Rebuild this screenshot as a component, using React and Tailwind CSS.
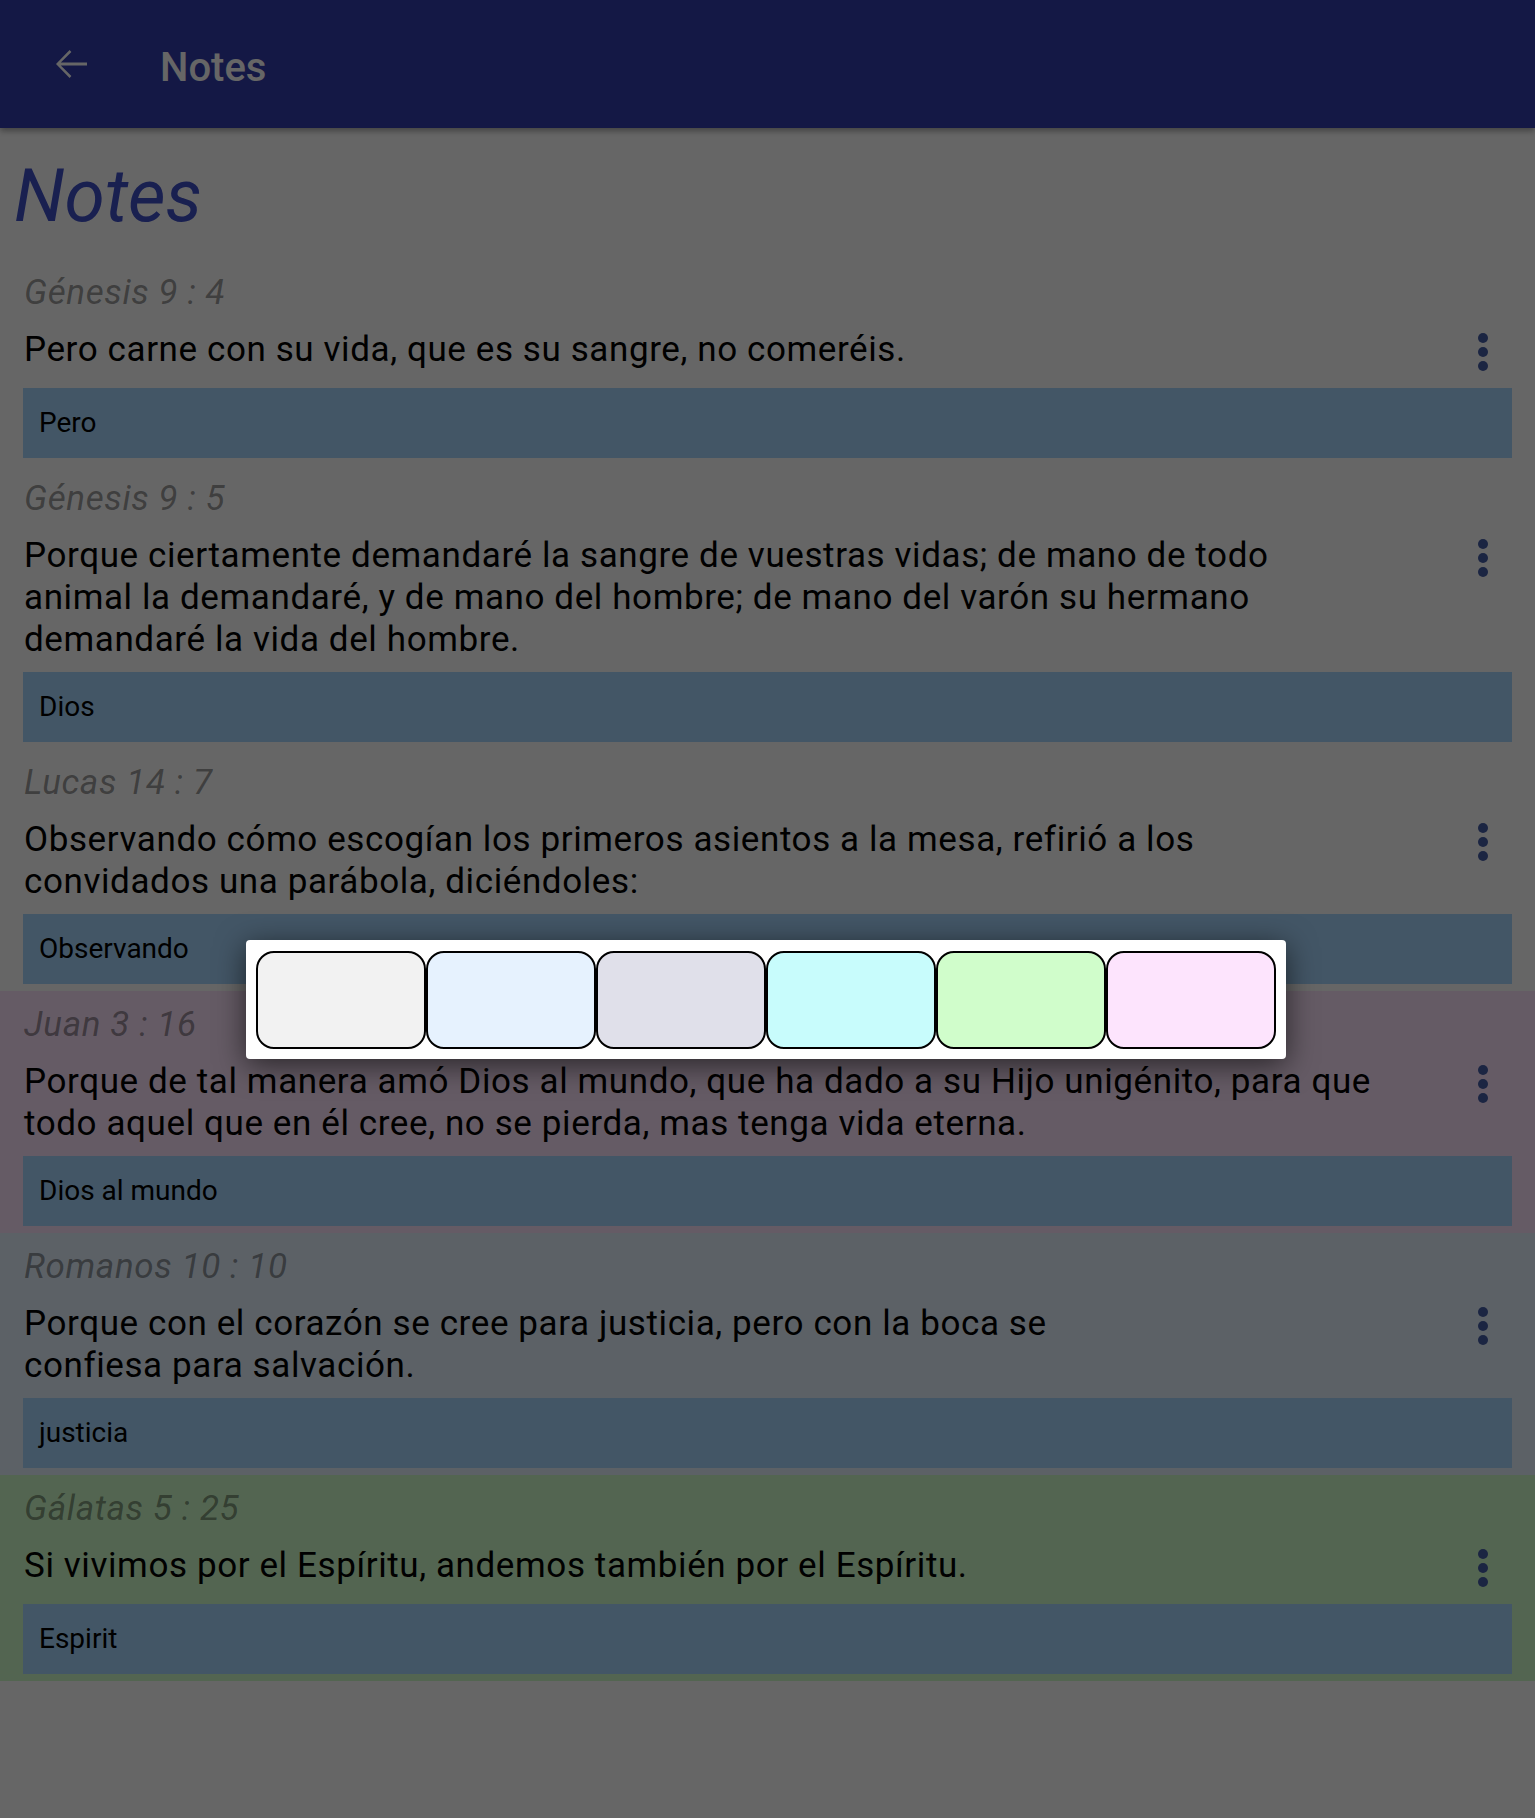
import { useState } from 'react'

const NOTES = [
  {
    ref: 'Génesis 9 : 4',
    lines: ['Pero carne con su vida, que es su sangre, no comeréis.'],
    tag: 'Pero',
    bg: 'bg-white',
  },
  {
    ref: 'Génesis 9 : 5',
    lines: [
      'Porque ciertamente demandaré la sangre de vuestras vidas; de mano de todo',
      'animal la demandaré, y de mano del hombre; de mano del varón su hermano',
      'demandaré la vida del hombre.',
    ],
    tag: 'Dios',
    bg: 'bg-white',
  },
  {
    ref: 'Lucas 14 : 7',
    lines: [
      'Observando cómo escogían los primeros asientos a la mesa, refirió a los',
      'convidados una parábola, diciéndoles:',
    ],
    tag: 'Observando',
    bg: 'bg-white',
  },
  {
    ref: 'Juan 3 : 16',
    lines: [
      'Porque de tal manera amó Dios al mundo, que ha dado a su Hijo unigénito, para que',
      'todo aquel que en él cree, no se pierda, mas tenga vida eterna.',
    ],
    tag: 'Dios al mundo',
    bg: 'bg-[#fde4fd]',
  },
  {
    ref: 'Romanos 10 : 10',
    lines: [
      'Porque con el corazón se cree para justicia, pero con la boca se',
      'confiesa para salvación.',
    ],
    tag: 'justicia',
    bg: 'bg-[#e6f2fe]',
  },
  {
    ref: 'Gálatas 5 : 25',
    lines: ['Si vivimos por el Espíritu, andemos también por el Espíritu.'],
    tag: 'Espirit',
    bg: 'bg-[#d0fdcb]',
  },
]

const SWATCHES = [
  'bg-[#f2f2f2]',
  'bg-[#e6f2fe]',
  'bg-[#e0e0ea]',
  'bg-[#c8fcfc]',
  'bg-[#d0fdcb]',
  'bg-[#fde4fd]',
]

function ArrowBack() {
  return (
    <svg width="48" height="48" viewBox="0 0 24 24" fill="white">
      <path d="M20 11.25H6.9l5.3-5.3-.9-.9L4.5 12l6.8 6.95.9-.9-5.3-5.3H20z" />
    </svg>
  )
}

function Dots() {
  return (
    <div className="flex w-[10px] flex-col items-center gap-[4px] pt-[4px]">
      <span className="h-[10px] w-[10px] rounded-full bg-[#445ca5]" />
      <span className="h-[10px] w-[10px] rounded-full bg-[#445ca5]" />
      <span className="h-[10px] w-[10px] rounded-full bg-[#445ca5]" />
    </div>
  )
}

function NoteRow({ note }) {
  return (
    <div className={`${note.bg} pb-[7px] pt-[14px]`}>
      <div className="px-[24px] text-[35px] italic leading-[40px] tracking-[0.6px] text-black/40">
        {note.ref}
      </div>
      <div className="mt-[16px] flex min-h-[48px] items-start justify-between pl-[24px] pr-[47px]">
        <p className="text-[35px] leading-[42px] tracking-[0.6px] text-black">
          {note.lines.map((l, i) => (
            <span key={i} className="block">
              {l}
            </span>
          ))}
        </p>
        <Dots />
      </div>
      <div className="mx-[23px] mt-[11px] flex h-[70px] items-center bg-[#a8d8ff] pl-[16px] text-[28px] text-black">
        {note.tag}
      </div>
    </div>
  )
}

export default function App() {
  const [picked, setPicked] = useState(null)

  return (
    <div
      className="relative min-h-[1818px] bg-white"
      style={{ fontFamily: 'Roboto, "Noto Sans", sans-serif' }}
    >
      <header className="relative z-10 flex h-[128px] items-center bg-[#323cad] shadow-[0_3px_6px_rgba(0,0,0,0.35)]">
        <div className="ml-[47px]">
          <ArrowBack />
        </div>
        <h1 className="ml-[65px] mt-[7px] text-[40px] font-medium text-white">Notes</h1>
      </header>

      <h2 className="ml-[14px] mt-[24px] text-[73px] italic leading-[89px] text-[#4050c8]">Notes</h2>

      <div className="mt-[18px]">
        {NOTES.map((n) => (
          <NoteRow key={n.ref} note={n} />
        ))}
      </div>

      {/* dimmed page behind the colour picker */}
      <div className="absolute inset-0 z-20 bg-black/60" />

      <div className="absolute left-[246px] top-[940px] z-30 flex rounded-[4px] bg-white pb-[10px] pl-[10px] pr-[10px] pt-[11px] shadow-[0_6px_30px_rgba(0,0,0,0.6)]">
        {SWATCHES.map((c, i) => (
          <button
            key={c}
            onClick={() => setPicked(i)}
            className={`${c} h-[98px] w-[170px] rounded-[18px] border-2 border-black ${picked === i ? 'ring-2 ring-black' : ''}`}
          />
        ))}
      </div>
    </div>
  )
}
